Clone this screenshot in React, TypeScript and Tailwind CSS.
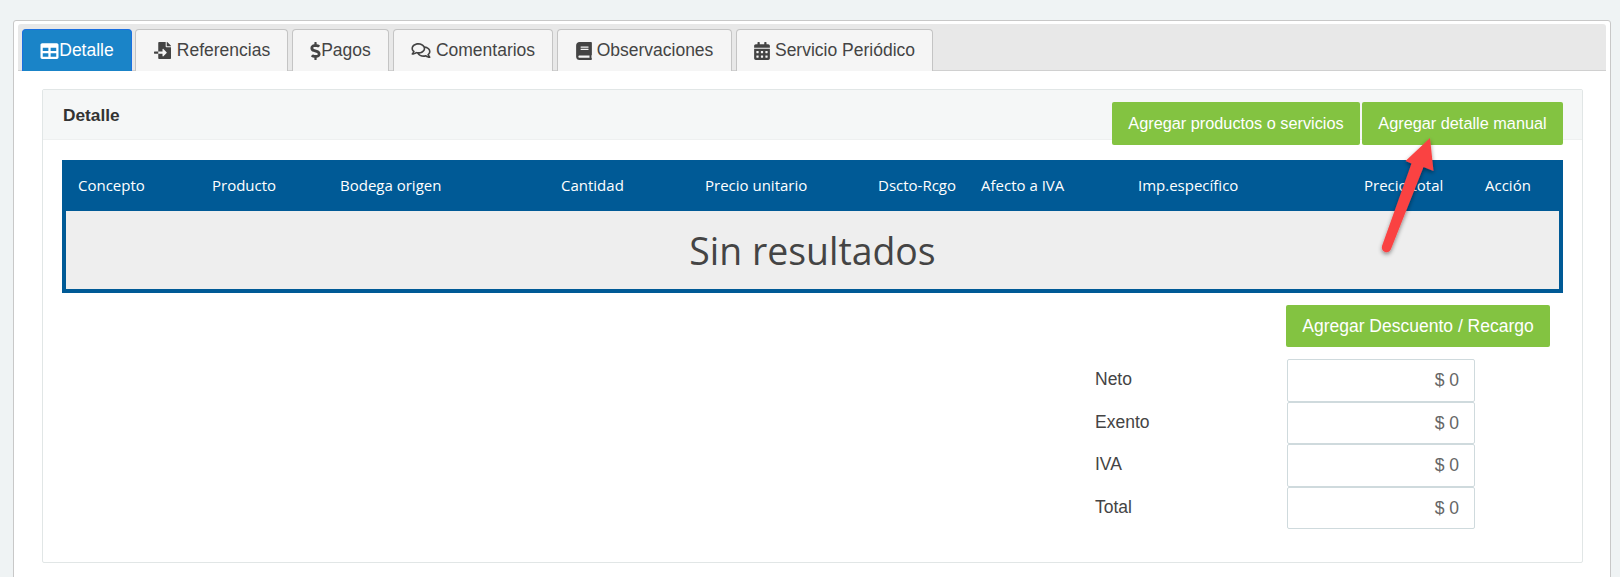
import React from 'react';
import { FaTable, FaFileImport, FaDollarSign, FaRegComments, FaBook, FaCalendarAlt } from 'react-icons/fa';

const tabs = [
  { label: 'Referencias', icon: <FaFileImport className="w-[19px] h-[17px] mr-[5px]" />, width: 'w-[153px]' },
  { label: 'Pagos', icon: <FaDollarSign className="w-[11px] h-[18px]" />, width: 'w-[97px]' },
  { label: 'Comentarios', icon: <FaRegComments className="w-[20px] h-[17px] mr-[5px]" />, width: 'w-[160px]' },
  { label: 'Observaciones', icon: <FaBook className="w-[16px] h-[18px] mr-[5px]" />, width: 'w-[175px]' },
  { label: 'Servicio Periódico', icon: <FaCalendarAlt className="w-[16px] h-[18px] mr-[5px]" />, width: 'w-[197px]' },
];

const columns = ['Concepto', 'Producto', 'Bodega origen', 'Cantidad', 'Precio unitario', 'Dscto-Rcgo', 'Afecto a IVA', 'Imp.específico', 'Precio total', 'Acción'];

const totals = ['Neto', 'Exento', 'IVA', 'Total'];

function GreenButton({ children, className }: { children: React.ReactNode; className: string }) {
  return (
    <button className={`bg-[#83c341] text-white rounded-[2px] font-['Liberation_Sans',sans-serif] ${className}`}>
      {children}
    </button>
  );
}

export default function App() {
  return (
    <div className="relative h-[577px] overflow-hidden bg-[#eff3f4] pt-5 pl-[13px] pr-[9px] font-['Liberation_Sans',sans-serif] text-[#333]">
      <div className="h-[600px] bg-white border border-[#c8c8c8] rounded-t-[3px] px-1 pt-[3px]">
        {/* tabs */}
        <div className="h-[47px] bg-[#e8e8e8] border-b border-[#d0d0d0] rounded-t-[3px] pt-[5px] pl-1 flex gap-[4px]">
          <div className="w-[110px] h-[42px] bg-[#1a84c8] border border-[#1a6fe0] border-b-0 rounded-t-[4px] text-white text-[17.5px] flex items-center justify-center -mr-px">
            <FaTable className="w-[19px] h-[18px]" />
            Detalle
          </div>
          {tabs.map((tab) => (
            <div
              key={tab.label}
              className={`${tab.width} h-[42px] bg-[#f5f5f5] border border-[#c4c4c4] border-b-0 rounded-t-[4px] text-[#444] text-[17.5px] flex items-center justify-center`}
            >
              {tab.icon}
              {tab.label}
            </div>
          ))}
        </div>

        {/* card */}
        <div className="ml-6 mr-[23px] mt-[18px] h-[474px] border border-[#e1e6e6] rounded-[2px] px-[19px]">
          <div className="h-[50px] -mx-[19px] bg-[#f5f7f7] border-b border-[#eef0f0] pl-5 pr-[19px] flex justify-between">
            <div className="pt-[15px] text-[17.3px] font-bold text-[#333] leading-[20px]">Detalle</div>
            <div className="pt-[12px] flex gap-[2px] h-[56px]">
              <GreenButton className="w-[248px] h-[43px] text-[16.3px]">Agregar productos o servicios</GreenButton>
              <GreenButton className="w-[201px] h-[43px] text-[16.3px]">Agregar detalle manual</GreenButton>
            </div>
          </div>

          <div className="mt-5 border-4 border-t-0 border-[#005a96]">
            <div className="h-[51px] -mx-1 bg-[#005a96] text-white text-[15px] font-['Open_Sans',sans-serif] grid grid-cols-[134px_128px_221px_144px_173px_103px_157px_226px_121px_1fr] items-center pl-[16px]">
              {columns.map((column) => (
                <div key={column} className="whitespace-nowrap">{column}</div>
              ))}
            </div>
            <div className="h-[78px] pt-[2px] bg-[#eeeeee] flex items-center justify-center text-[#444] text-[37.4px] font-['Open_Sans',sans-serif]">
              Sin resultados
            </div>
          </div>

          <div className="mt-3 flex justify-end pr-[13px]">
            <GreenButton className="w-[264px] h-[42px] text-[17.5px]">Agregar Descuento / Recargo</GreenButton>
          </div>

          <div className="mt-3 ml-[1033px] flex flex-col">
            {totals.map((total) => (
              <div key={total} className="flex h-[42.5px]">
                <div className="w-[192px] pt-[11px] text-[17.5px] leading-[18px] text-[#444]">{total}</div>
                <div className="w-[188px] h-[42.5px] bg-white border border-[#cfdadd] rounded-[2px] text-[#666] text-[17.5px] flex items-center justify-end pr-[15px]">
                  $ 0
                </div>
              </div>
            ))}
          </div>
        </div>
      </div>

      {/* red annotation arrow */}
      <svg className="absolute left-[1370px] top-[130px]" width="90" height="135" viewBox="1370 130 90 135" fill="none">
        <defs>
          <filter id="arrowShadow" x="-30%" y="-30%" width="160%" height="160%">
            <feDropShadow dx="0" dy="2" stdDeviation="2" floodColor="#000" floodOpacity="0.45" />
          </filter>
        </defs>
        <path
          filter="url(#arrowShadow)"
          fill="#fa4343"
          d="M1430 138 L1433.5 171 L1423.5 167 L1391 249 Q1389 253 1385 252 Q1381 250 1382 246 L1411.5 163.5 L1405.5 161 Z"
        />
      </svg>
    </div>
  );
}
